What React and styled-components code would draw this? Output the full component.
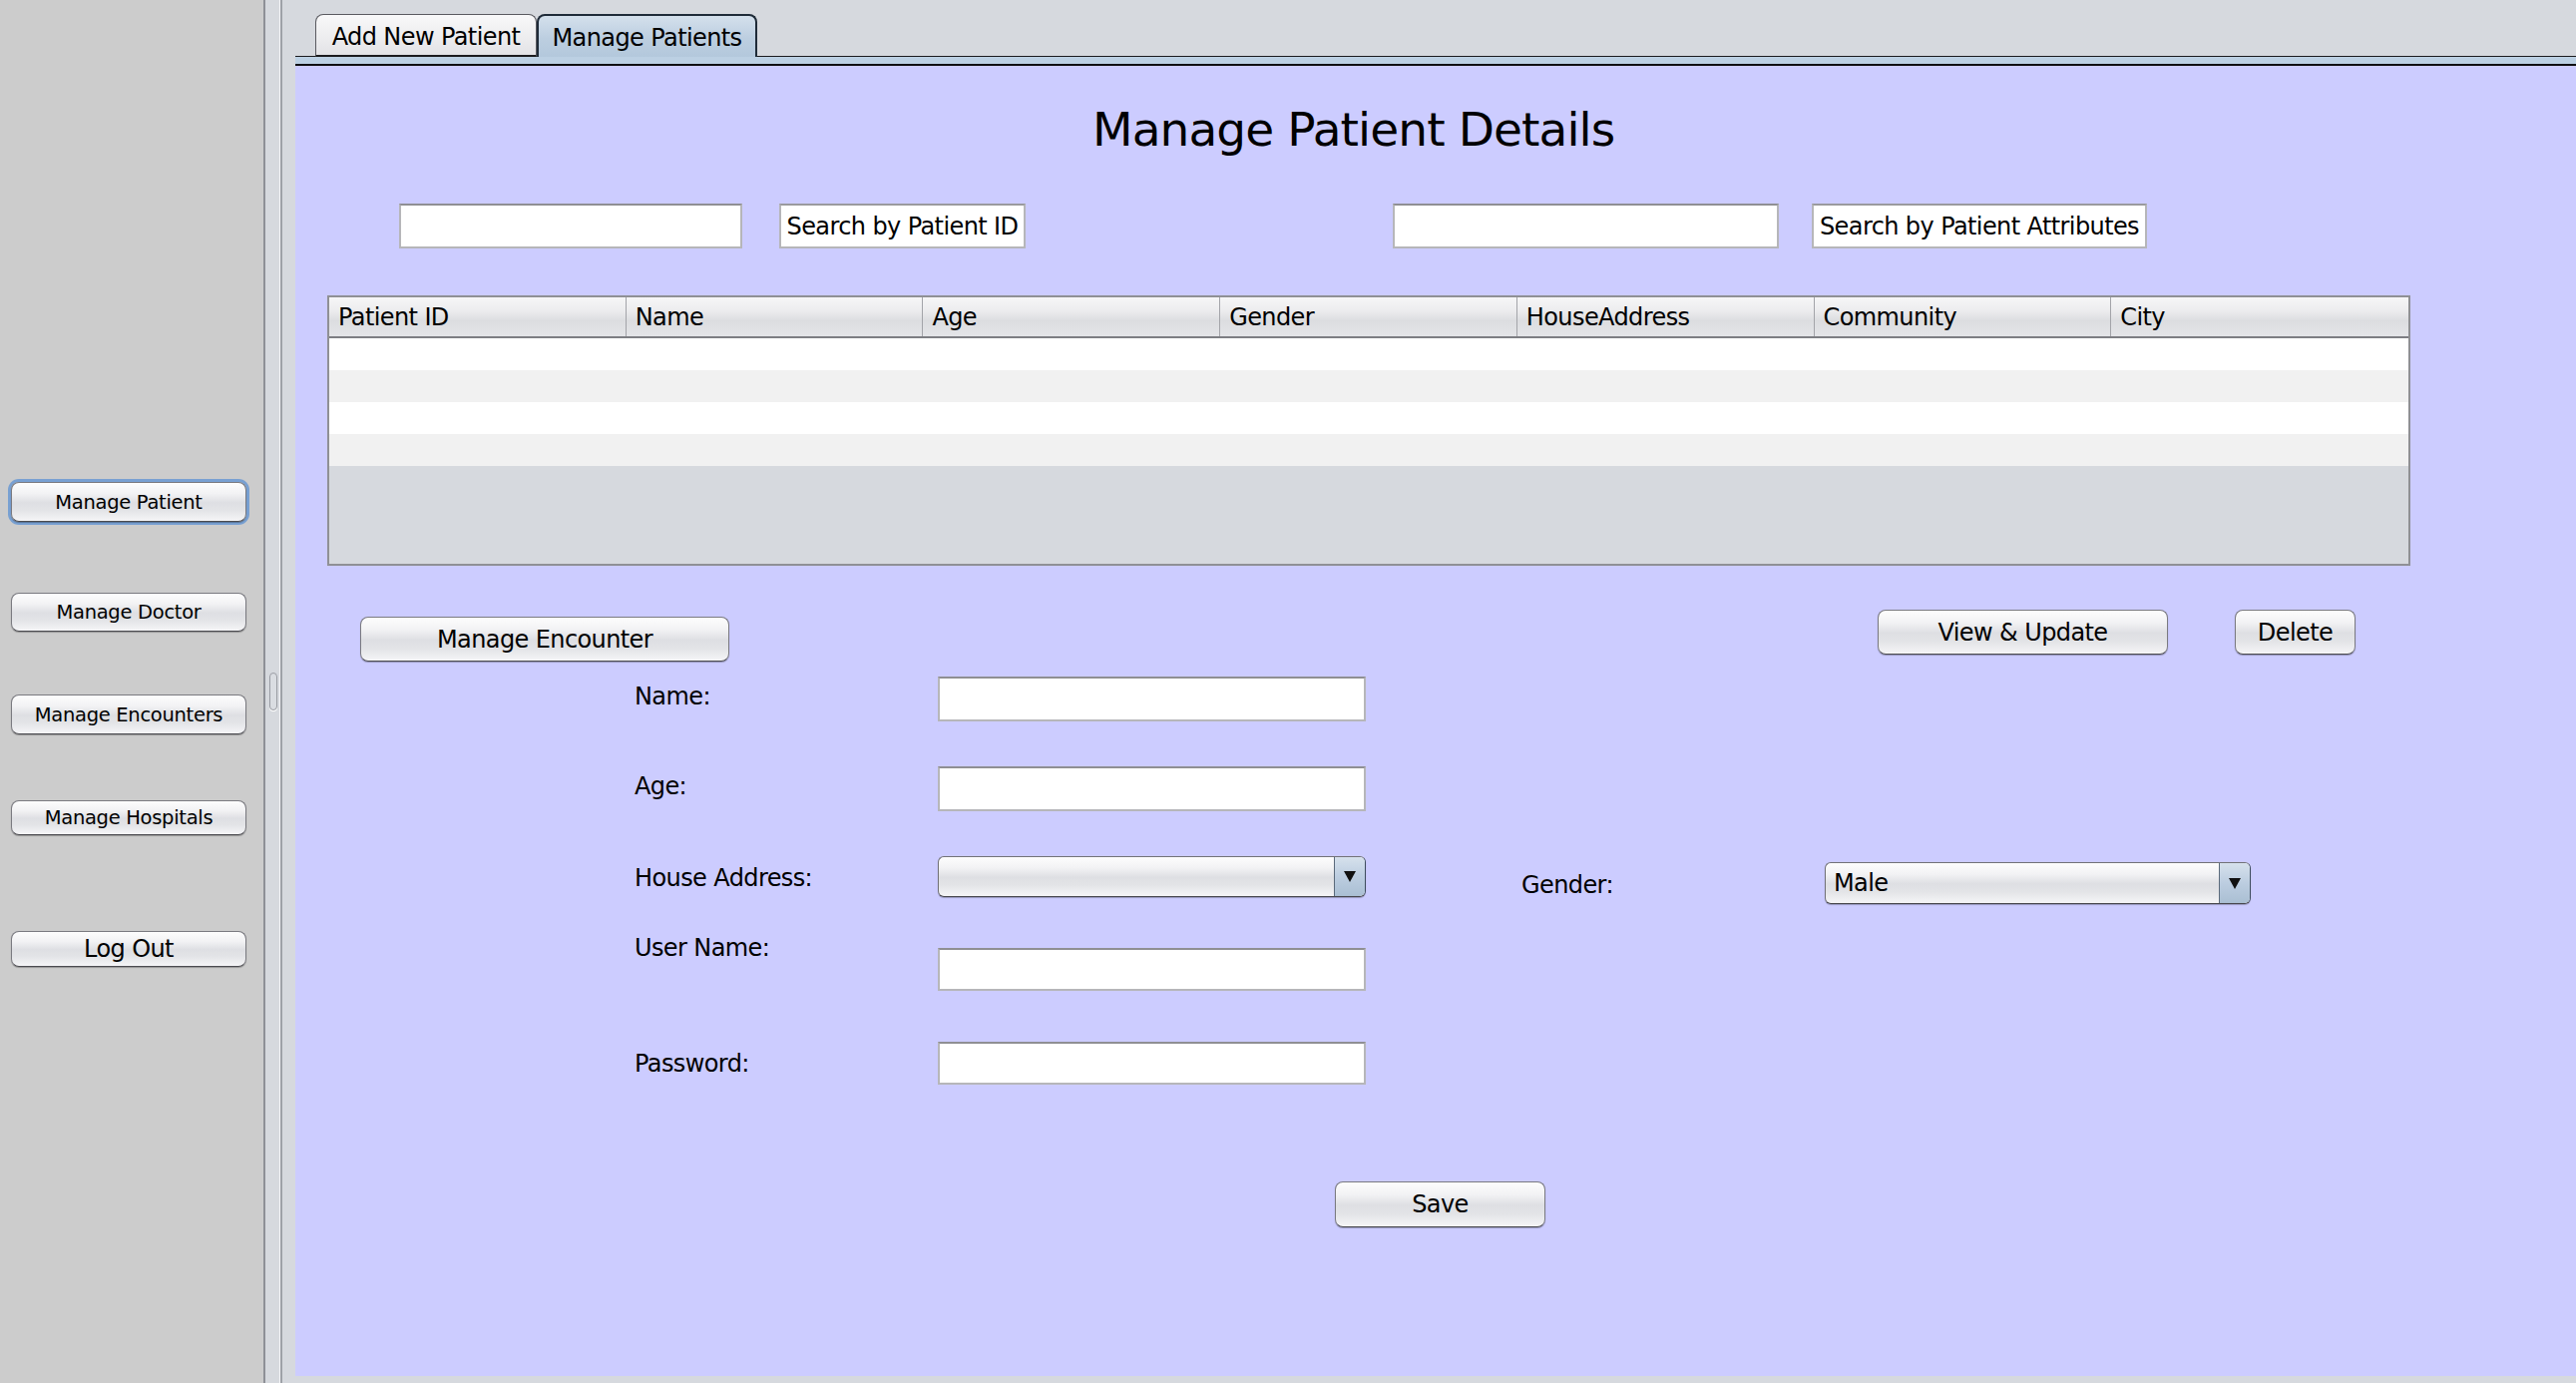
import React from 'react';
import styled, { createGlobalStyle } from 'styled-components';

const GlobalStyle = createGlobalStyle`
  html, body { margin: 0; padding: 0; }
  body {
    font-family: "DejaVu Sans", "Lucida Grande", sans-serif;
    overflow: hidden;
    background: #d6d9de;
  }
  * { box-sizing: border-box; }
`;

const aquaBg = `linear-gradient(to bottom, #fdfdfd 0%, #f2f2f4 28%, #dedfe3 52%, #e3e4e7 72%, #f5f5f7 100%)`;

const Frame = styled.div`
  display: flex;
  width: 2582px;
  height: 1386px;
  font-family: "DejaVu Sans", "Lucida Grande", sans-serif;
  color: #000;
`;

const Sidebar = styled.aside`
  width: 264px;
  flex: none;
  background: #cccccc;
  display: flex;
  flex-direction: column;
  align-items: flex-start;
  padding-left: 11px;
`;

const AquaButton = styled.button`
  width: ${p => p.$w}px;
  height: ${p => p.$h}px;
  flex: none;
  padding: 0;
  border: 1px solid #7a7a80;
  border-bottom-color: #4b4b50;
  border-radius: 8px;
  background: ${aquaBg};
  box-shadow: 0 1px 1px rgba(0, 0, 0, 0.28)${p => (p.$focus ? ', 0 0 0 3px rgba(104, 152, 210, 0.85)' : '')};
  font-family: inherit;
  font-size: ${p => p.$fs || 24}px;
  letter-spacing: ${p => (p.$fs && p.$fs < 22 ? '-0.3px' : '-0.6px')};
  color: #000;
  display: flex;
  align-items: center;
  justify-content: center;
  cursor: default;
`;

const SideButton = styled(AquaButton)`
  margin-top: ${p => p.$mt}px;
`;

const Divider = styled.div`
  width: 19px;
  flex: none;
  background: #d6d9de;
  border-left: 2px solid #8e9097;
  border-right: 2px solid #9ea1a7;
  box-shadow: inset -1px 0 0 #f4f5f7;
  display: flex;
  align-items: center;
  justify-content: center;
`;

const Grip = styled.div`
  width: 8px;
  height: 38px;
  border: 1px solid #999ca3;
  border-radius: 4px;
  background: #dadde2;
  box-shadow: 0 1px 0 #ffffff;
`;

const MainPanel = styled.main`
  flex: 1;
  min-width: 0;
  background: #d6d9de;
  padding: 14px 0 7px 13px;
  display: flex;
  flex-direction: column;
`;

const TabRow = styled.div`
  display: flex;
  align-items: flex-end;
  height: 43px;
  padding-left: 20px;
  border-bottom: 1px solid #1b1b1e;
`;

const Tab = styled.div`
  width: ${p => p.$w}px;
  height: 43px;
  margin-bottom: -1px;
  border-radius: 8px 8px 0 0;
  font-size: 24px;
  letter-spacing: -0.6px;
  display: flex;
  align-items: center;
  justify-content: center;
  ${p =>
    p.$active
      ? `
    padding-top: 2px;
    background: linear-gradient(to bottom, #d4e0ec 0%, #bccee0 55%, #b3c8dc 100%);
    border: 2px solid #1f2b38;
    border-bottom: none;
  `
      : `
    padding-top: 4px;
    background: linear-gradient(to bottom, #f8f8f9 0%, #ececee 60%, #e3e3e6 100%);
    border: 1px solid #5a5a60;
    border-bottom: 2px solid #1b1b1e;
  `}
`;

const TabStrip = styled.div`
  height: 9px;
  background: #bcd0e3;
  border-bottom: 2px solid #0f0f12;
`;

const Content = styled.section`
  flex: 1;
  background: #ccccff;
  display: flex;
  flex-direction: column;
  align-items: flex-start;
`;

const Title = styled.h1`
  margin: 36px 0 0 799px;
  font-size: 47px;
  line-height: 56px;
  font-weight: normal;
  letter-spacing: -0.9px;
  white-space: nowrap;
`;

const SearchRow = styled.div`
  display: flex;
  align-items: center;
  margin: 46px 0 0 104px;
  height: 45px;
`;

const TextField = styled.input`
  width: ${p => p.$w}px;
  height: ${p => p.$h || 45}px;
  margin-left: ${p => p.$ml || 0}px;
  flex: none;
  background: #ffffff;
  border: 2px solid #b6b6b9;
  border-top-color: #8f8f93;
  padding: 0 8px;
  font-family: inherit;
  font-size: 24px;
  outline: none;
`;

const SearchButton = styled.button`
  width: ${p => p.$w}px;
  height: 45px;
  margin-left: ${p => p.$ml}px;
  flex: none;
  background: #ffffff;
  border: 2px solid #b6b6b9;
  border-top-color: #9a9a9e;
  padding: 0;
  font-family: inherit;
  font-size: 24px;
  letter-spacing: -0.6px;
  color: #000;
  white-space: nowrap;
`;

const Table = styled.div`
  margin: 47px 0 0 32px;
  width: 2088px;
  height: 271px;
  border: 2px solid #8f9095;
  background: #d6d9de;
  display: flex;
  flex-direction: column;
`;

const HeaderRow = styled.div`
  display: grid;
  grid-template-columns: repeat(7, 1fr);
  height: 41px;
  flex: none;
  border-bottom: 2px solid #7d7e83;
  background: linear-gradient(to bottom, #f6f6f7 0%, #ececee 35%, #dcdde0 60%, #e4e5e8 100%);
`;

const HeaderCell = styled.div`
  display: flex;
  align-items: center;
  padding-left: 9px;
  font-size: 24px;
  letter-spacing: -0.6px;
  border-right: ${p => (p.$last ? 'none' : '1px solid #a3a4a9')};
  white-space: nowrap;
`;

const BodyRow = styled.div`
  height: 32px;
  flex: none;
  background: ${p => (p.$alt ? '#f1f1f1' : '#ffffff')};
`;

const ActionRow = styled.div`
  display: flex;
  align-items: flex-start;
  margin: 44px 0 0 65px;
`;

const ActionButton = styled(AquaButton)`
  margin-top: ${p => p.$mt || 0}px;
  margin-left: ${p => p.$ml || 0}px;
`;

const FormRow = styled.div`
  display: flex;
  align-items: ${p => p.$align || 'center'};
  margin: ${p => p.$mt}px 0 0 340px;
  height: ${p => p.$h}px;
`;

const FieldLabel = styled.label`
  width: ${p => p.$w || 304}px;
  flex: none;
  font-size: 24px;
  line-height: 28px;
  letter-spacing: -0.6px;
  white-space: nowrap;
  margin-top: ${p => p.$mt || 0}px;
  margin-left: ${p => p.$ml || 0}px;
`;

const Combo = styled.div`
  width: ${p => p.$w}px;
  height: ${p => p.$h}px;
  margin-top: ${p => p.$mt || 0}px;
  flex: none;
  display: flex;
  border: 1px solid #727277;
  border-right-color: #3e4c5d;
  border-bottom-color: #48484e;
  border-radius: 6px;
  overflow: hidden;
  background: ${aquaBg};
  box-shadow: 0 1px 1px rgba(0, 0, 0, 0.28);
`;

const ComboValue = styled.div`
  flex: 1;
  padding-left: 8px;
  display: flex;
  align-items: center;
  font-size: 24px;
  letter-spacing: -0.6px;
`;

const ComboArrow = styled.div`
  width: 31px;
  flex: none;
  border-left: 1px solid #5b6a7b;
  background: linear-gradient(to bottom, #d6e1ec 0%, #bccde0 50%, #aabfd3 100%);
  display: flex;
  align-items: center;
  justify-content: center;
`;

const Triangle = styled.span`
  width: 0;
  height: 0;
  border-left: 6px solid transparent;
  border-right: 6px solid transparent;
  border-top: 11px solid #111;
`;

const SaveRow = styled.div`
  margin: 97px 0 0 1042px;
`;

const columns = ['Patient ID', 'Name', 'Age', 'Gender', 'HouseAddress', 'Community', 'City'];

export default function App() {
  return (
    <>
      <GlobalStyle />
      <Frame>
        <Sidebar>
          <SideButton $mt={483} $w={236} $h={40} $fs={19.5} $focus>Manage Patient</SideButton>
          <SideButton $mt={71} $w={236} $h={39} $fs={19.5}>Manage Doctor</SideButton>
          <SideButton $mt={63} $w={236} $h={40} $fs={19.5}>Manage Encounters</SideButton>
          <SideButton $mt={66} $w={236} $h={35} $fs={19.5}>Manage Hospitals</SideButton>
          <SideButton $mt={96} $w={236} $h={36} $fs={24}>Log Out</SideButton>
        </Sidebar>
        <Divider>
          <Grip />
        </Divider>
        <MainPanel>
          <TabRow>
            <Tab $w={222}>Add New Patient</Tab>
            <Tab $w={221} $active>Manage Patients</Tab>
          </TabRow>
          <TabStrip />
          <Content>
            <Title>Manage Patient Details</Title>
            <SearchRow>
              <TextField $w={344} defaultValue="" />
              <SearchButton $w={247} $ml={37}>Search by Patient ID</SearchButton>
              <TextField $w={387} $ml={368} defaultValue="" />
              <SearchButton $w={336} $ml={33}>Search by Patient Attributes</SearchButton>
            </SearchRow>
            <Table>
              <HeaderRow>
                {columns.map((c, i) => (
                  <HeaderCell key={c} $last={i === columns.length - 1}>{c}</HeaderCell>
                ))}
              </HeaderRow>
              <BodyRow />
              <BodyRow $alt />
              <BodyRow />
              <BodyRow $alt />
            </Table>
            <ActionRow>
              <ActionButton $w={370} $h={45} $mt={7}>Manage Encounter</ActionButton>
              <ActionButton $w={291} $h={45} $ml={1151}>View &amp; Update</ActionButton>
              <ActionButton $w={121} $h={45} $ml={67}>Delete</ActionButton>
            </ActionRow>
            <FormRow $mt={15} $h={45}>
              <FieldLabel $mt={-6}>Name:</FieldLabel>
              <TextField $w={429} defaultValue="" />
            </FormRow>
            <FormRow $mt={45} $h={45}>
              <FieldLabel $mt={-6}>Age:</FieldLabel>
              <TextField $w={429} defaultValue="" />
            </FormRow>
            <FormRow $mt={45} $h={48} $align="flex-start">
              <FieldLabel $mt={8}>House Address:</FieldLabel>
              <Combo $w={429} $h={41}>
                <ComboValue />
                <ComboArrow><Triangle /></ComboArrow>
              </Combo>
              <FieldLabel $mt={15} $ml={156}>Gender:</FieldLabel>
              <Combo $w={427} $h={42} $mt={6}>
                <ComboValue>Male</ComboValue>
                <ComboArrow><Triangle /></ComboArrow>
              </Combo>
            </FormRow>
            <FormRow $mt={44} $h={43} $align="flex-start">
              <FieldLabel $mt={-14}>User Name:</FieldLabel>
              <TextField $w={429} $h={43} defaultValue="" />
            </FormRow>
            <FormRow $mt={51} $h={43}>
              <FieldLabel>Password:</FieldLabel>
              <TextField $w={429} $h={43} type="password" defaultValue="" />
            </FormRow>
            <SaveRow>
              <AquaButton $w={211} $h={46}>Save</AquaButton>
            </SaveRow>
          </Content>
        </MainPanel>
      </Frame>
    </>
  );
}
